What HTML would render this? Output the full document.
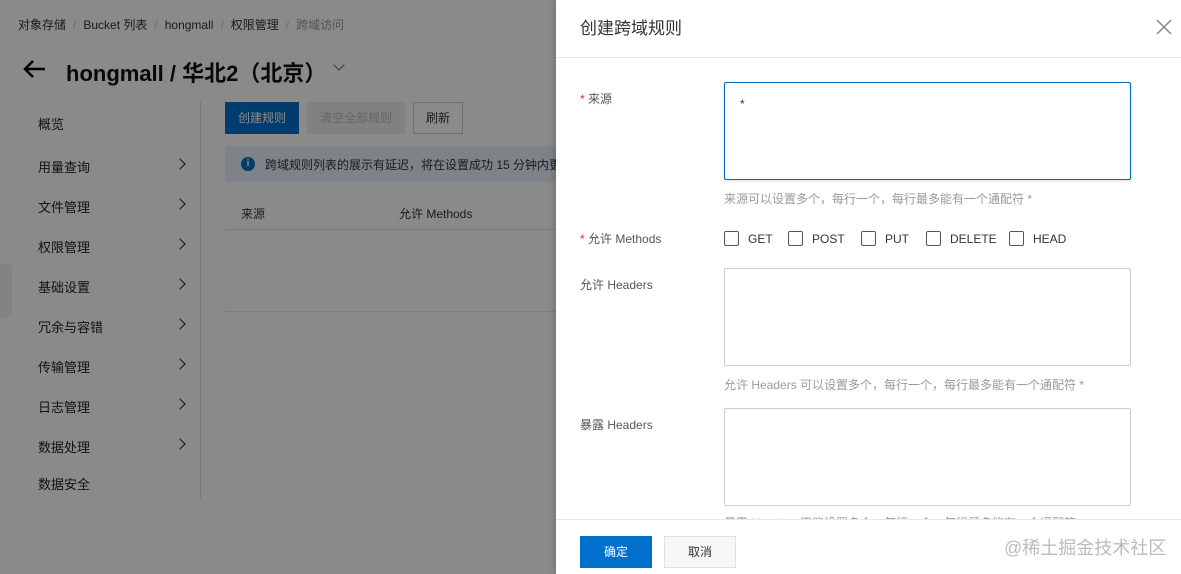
<!DOCTYPE html>
<html><head><meta charset="utf-8"><style>
*{margin:0;padding:0;box-sizing:border-box}
body{width:1181px;height:574px;overflow:hidden;position:relative;font-family:"Liberation Sans","Noto Sans CJK SC",sans-serif;font-size:12px;color:#333;background:#fff}
.a{position:absolute}
.chev{position:absolute;width:8px;height:8px;border-right:1.5px solid #222;border-top:1.5px solid #222;transform:rotate(45deg)}
.nav{position:absolute;left:38px;font-size:13px;color:#222}
.ov{position:absolute;left:0;top:0;width:556px;height:574px;background:rgba(0,0,0,.46)}
.lbl{position:absolute;left:580px;font-size:12px;color:#555}
.req{color:#d93026}
.box{position:absolute;left:724px;width:407px;border:1px solid #ccc;border-radius:2px;background:#fff}
.hint{position:absolute;left:724px;font-size:12px;color:#999}
.cb{position:absolute;top:231px;width:15px;height:15px;border:1px solid #555;border-radius:2px}
.cbt{position:absolute;top:232px;font-size:12px;color:#333}
.sep{color:#ccc;margin:0 7px}
</style></head><body>
<div class="a" style="left:18px;top:16px;font-size:12px;color:#333;white-space:nowrap">对象存储<span class="sep">/</span>Bucket 列表<span class="sep">/</span>hongmall<span class="sep">/</span>权限管理<span class="sep">/</span><span style="color:#999">跨域访问</span></div>
<svg class="a" style="left:22px;top:59px" width="24" height="20"><path d="M23 10H3M11 2L3 10L11 18" stroke="#000" stroke-width="2.5" fill="none"/></svg>
<div class="a" style="left:66px;top:56px;font-size:22px;color:#111;font-weight:bold">hongmall / 华北2（北京）</div>
<div class="chev" style="left:335px;top:61px;transform:rotate(135deg);border-color:#666"></div>
<div class="a" style="left:200px;top:100px;width:1px;height:400px;background:#e5e5e5"></div>
<div class="nav" style="top:114px">概览</div>
<div class="nav" style="top:157px">用量查询</div><div class="chev" style="left:176px;top:160px"></div>
<div class="nav" style="top:197px">文件管理</div><div class="chev" style="left:176px;top:200px"></div>
<div class="nav" style="top:237px">权限管理</div><div class="chev" style="left:176px;top:240px"></div>
<div class="nav" style="top:277px">基础设置</div><div class="chev" style="left:176px;top:280px"></div>
<div class="nav" style="top:317px">冗余与容错</div><div class="chev" style="left:176px;top:320px"></div>
<div class="nav" style="top:357px">传输管理</div><div class="chev" style="left:176px;top:360px"></div>
<div class="nav" style="top:397px">日志管理</div><div class="chev" style="left:176px;top:400px"></div>
<div class="nav" style="top:437px">数据处理</div><div class="chev" style="left:176px;top:440px"></div>
<div class="nav" style="top:474px">数据安全</div>
<div class="a" style="left:0;top:264px;width:12px;height:54px;background:#f2f2f2;border-radius:0 6px 6px 0"></div>
<div class="a" style="left:225px;top:102px;width:74px;height:32px;background:#0070cc;color:#fff;font-size:12px;line-height:32px;text-align:center">创建规则</div>
<div class="a" style="left:307px;top:102px;width:98px;height:32px;background:#eee;color:#bbb;font-size:12px;line-height:32px;text-align:center">清空全部规则</div>
<div class="a" style="left:413px;top:102px;width:50px;height:32px;border:1px solid #ccc;color:#333;font-size:12px;line-height:30px;text-align:center">刷新</div>
<div class="a" style="left:225px;top:146px;width:331px;height:36px;background:#e8f2fb"></div>
<div class="a" style="left:241px;top:157px;width:14px;height:14px;border-radius:50%;background:#0070cc;color:#fff;font-size:10px;line-height:14px;text-align:center;font-weight:bold">i</div>
<div class="a" style="left:265px;top:156px;font-size:12px;color:#333;white-space:nowrap">跨域规则列表的展示有延迟，将在设置成功 15 分钟内更</div>
<div class="a" style="left:241px;top:205px;font-size:12px;color:#333">来源</div>
<div class="a" style="left:399px;top:205px;font-size:12px;color:#333">允许 Methods</div>
<div class="a" style="left:225px;top:229px;width:331px;height:1px;background:#e5e5e5"></div>
<div class="a" style="left:225px;top:311px;width:331px;height:1px;background:#e5e5e5"></div>
<div class="ov"></div>
<div class="a" style="left:556px;top:0;width:625px;height:574px;background:#fff;box-shadow:-2px 0 6px rgba(0,0,0,.15)"></div>
<div class="a" style="left:580px;top:14px;font-size:17px;color:#333">创建跨域规则</div>
<div class="a" style="left:1156px;top:19px;width:16px;height:16px">
<svg width="16" height="16"><path d="M1 1L15 15M15 1L1 15" stroke="#888" stroke-width="1.5"/></svg></div>
<div class="a" style="left:556px;top:57px;width:625px;height:1px;background:#e8e8e8"></div>
<div class="lbl" style="top:90px"><span class="req">*</span> 来源</div>
<div class="box" style="top:82px;height:98px;border-color:#0064c8;box-shadow:0 1px 3px rgba(0,0,0,.15)"><span class="a" style="left:15px;top:14px;font-size:12px;color:#333">*</span></div>
<div class="hint" style="top:190px">来源可以设置多个，每行一个，每行最多能有一个通配符 *</div>
<div class="lbl" style="top:230px"><span class="req">*</span> 允许 Methods</div>
<div class="cb" style="left:724px"></div><div class="cbt" style="left:748px">GET</div>
<div class="cb" style="left:788px"></div><div class="cbt" style="left:812px">POST</div>
<div class="cb" style="left:861px"></div><div class="cbt" style="left:885px">PUT</div>
<div class="cb" style="left:926px"></div><div class="cbt" style="left:950px">DELETE</div>
<div class="cb" style="left:1009px"></div><div class="cbt" style="left:1033px">HEAD</div>
<div class="lbl" style="top:276px">允许 Headers</div>
<div class="box" style="top:268px;height:98px"></div>
<div class="hint" style="top:376px">允许 Headers 可以设置多个，每行一个，每行最多能有一个通配符 *</div>
<div class="lbl" style="top:416px">暴露 Headers</div>
<div class="box" style="top:408px;height:98px"></div>
<div class="hint" style="top:514px;height:5px;overflow:hidden">暴露 Headers 不能设置多个，每行一个，每行最多能有一个通配符</div>
<div class="a" style="left:556px;top:519px;width:625px;height:55px;background:#fff;border-top:1px solid #e8e8e8"></div>
<div class="a" style="left:580px;top:536px;width:72px;height:32px;background:#0070cc;color:#fff;font-size:12px;line-height:32px;text-align:center">确定</div>
<div class="a" style="left:664px;top:536px;width:72px;height:32px;border:1px solid #ddd;background:#f7f7f7;color:#333;font-size:12px;line-height:30px;text-align:center">取消</div>
<div class="a" style="left:1004px;top:534px;font-size:18px;color:#bbb;white-space:nowrap">@稀土掘金技术社区</div>
</body></html>
